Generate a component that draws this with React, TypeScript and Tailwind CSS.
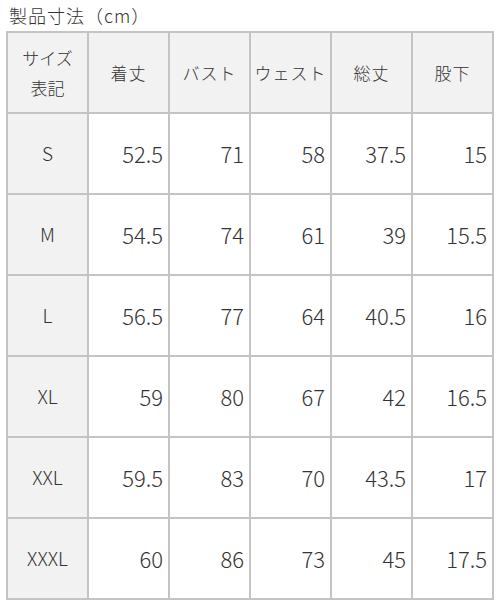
import React from "react"

const headers = ["着丈", "バスト", "ウェスト", "総丈", "股下"]

const rows: { size: string; values: string[] }[] = [
  { size: "S", values: ["52.5", "71", "58", "37.5", "15"] },
  { size: "M", values: ["54.5", "74", "61", "39", "15.5"] },
  { size: "L", values: ["56.5", "77", "64", "40.5", "16"] },
  { size: "XL", values: ["59", "80", "67", "42", "16.5"] },
  { size: "XXL", values: ["59.5", "83", "70", "43.5", "17"] },
  { size: "XXXL", values: ["60", "86", "73", "45", "17.5"] },
]

const font = { fontFamily: '"Noto Sans CJK JP", "Noto Sans", sans-serif' }

export default function App() {
  return (
    <div className="w-[500px] h-[600px] bg-white text-[#333333]" style={font}>
      <div className="pl-[9px] pt-[3px] h-[31px] text-[18px] leading-[24px] tracking-[1px] font-light">製品寸法（cm）</div>
      <div className="ml-[6px] w-[488px] grid grid-cols-[repeat(6,81px)] border-l-2 border-t-2 border-[#c4c4c4]">
        <div className="h-[81px] flex flex-col items-center justify-center bg-[#f2f2f2] border-r-2 border-b-2 border-[#c4c4c4] text-[17px] leading-[30px] font-light">
          <span>サイズ</span>
          <span>表記</span>
        </div>
        {headers.map((h) => (
          <div
            key={h}
            className="h-[81px] flex items-center justify-center bg-[#f2f2f2] border-r-2 border-b-2 border-[#c4c4c4] text-[17px] tracking-[1px] font-light"
          >
            {h}
          </div>
        ))}
        {rows.map((r) => (
          <React.Fragment key={r.size}>
            <div className="h-[81px] flex items-center justify-center bg-[#f2f2f2] border-r-2 border-b-2 border-[#c4c4c4] text-[19px] font-light">
              {r.size}
            </div>
            {r.values.map((v, i) => (
              <div
                key={i}
                className="h-[81px] flex items-center justify-end pr-[5px] border-r-2 border-b-2 border-[#c4c4c4] text-[22px] font-light"
              >
                {v}
              </div>
            ))}
          </React.Fragment>
        ))}
      </div>
    </div>
  )
}
